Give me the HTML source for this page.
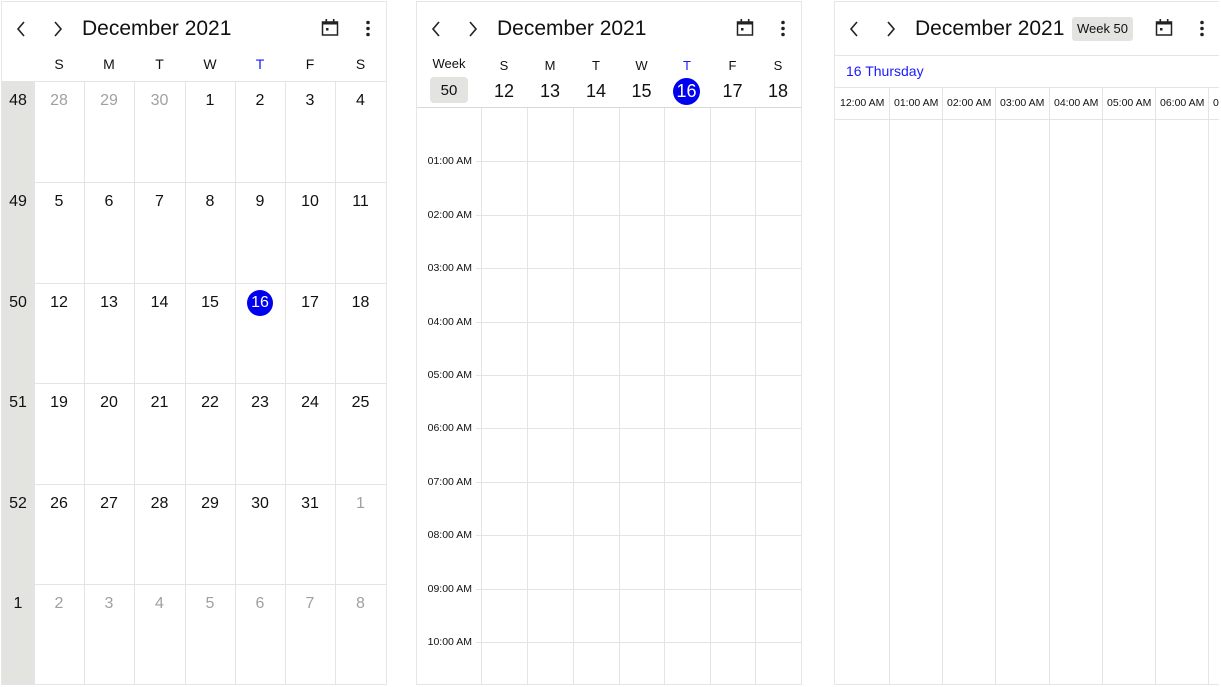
<!DOCTYPE html><html><head><style>
body{margin:0;width:1221px;height:687px;background:#fff;font-family:"Liberation Sans",sans-serif;position:relative;overflow:hidden;color:#111}
.a{position:absolute}
.p{position:absolute;top:1px;height:684px;border:1px solid #e6e6e6;box-sizing:border-box}
.hl{position:absolute;height:1px;background:#e4e4e4}
.vl{position:absolute;width:1px;background:#e4e4e4}
.t{position:absolute;font-size:21px;top:17px}
.c{position:absolute;text-align:center}
</style></head><body>
<div class="p" style="left:1px;width:386px"></div>
<div class="a" style="left:2px;top:81px;width:32px;height:604px;background:#e3e3df"></div>
<div id="p1"></div>
<div class="p" style="left:416px;width:386px"></div>
<div class="a" style="left:430px;top:77px;width:38px;height:26px;background:#e3e3df;border-radius:4px"></div>
<div id="p2"></div>
<div class="p" style="left:834px;width:386px"></div>
<div class="a" style="left:1072px;top:17px;width:61px;height:24px;background:#e3e3df;border-radius:3px;font-size:13px;text-align:center;line-height:24px">Week 50</div>
<div class="hl" style="left:835px;width:384px;top:55px"></div>
<div class="a" style="left:846px;top:63px;font-size:14px;color:#1a1aff">16 Thursday</div>
<div class="hl" style="left:835px;width:384px;top:87px"></div>
<div class="hl" style="left:835px;width:384px;top:119px"></div>
<div id="p3"></div>
<script>
function hdr(x0,ic){
 return `<svg class="a" style="left:${x0+8}px;top:18px" width="22" height="22"><path d="M14 4 L8 11 L14 18" stroke="#222" stroke-width="1.6" fill="none"/></svg>
<svg class="a" style="left:${x0+45}px;top:18px" width="22" height="22"><path d="M8 4 L14 11 L8 18" stroke="#222" stroke-width="1.6" fill="none"/></svg>
<div class="t" style="left:${x0+80}px">December 2021</div>
<svg class="a" style="left:${ic}px;top:18px" width="20" height="20"><rect x="2.5" y="4" width="15" height="13" fill="none" stroke="#222" stroke-width="1.5"/><rect x="2.5" y="4" width="15" height="2.5" fill="#222"/><rect x="5.5" y="1" width="1.6" height="4" fill="#222"/><rect x="12.9" y="1" width="1.6" height="4" fill="#222"/><rect x="6" y="10" width="2.5" height="2.5" fill="#222"/></svg>
<svg class="a" style="left:${ic+45}px;top:19px" width="6" height="20"><circle cx="3" cy="3.5" r="1.8" fill="#222"/><circle cx="3" cy="9.5" r="1.8" fill="#222"/><circle cx="3" cy="15.5" r="1.8" fill="#222"/></svg>`;}
let h='';
h+=hdr(2,320);
const dn=['S','M','T','W','T','F','S'];
const cx=[34,84,134,185,235,285,335,386];
for(let i=0;i<7;i++){h+=`<div class="c" style="left:${cx[i]}px;width:${cx[i+1]-cx[i]}px;top:56px;font-size:14px;color:${i==4?'#1a1aff':'#111'}">${dn[i]}</div>`}
const ry=[81,182,283,383,484,584,685];
const wk=[48,49,50,51,52,1];
const days=[[28,29,30,1,2,3,4],[5,6,7,8,9,10,11],[12,13,14,15,16,17,18],[19,20,21,22,23,24,25],[26,27,28,29,30,31,1],[2,3,4,5,6,7,8]];
for(let r=0;r<6;r++){
 h+=`<div class="hl" style="left:2px;width:384px;top:${ry[r]}px"></div>`;
 h+=`<div class="a" style="left:2px;width:32px;text-align:center;top:${ry[r]+11}px;font-size:16px">${wk[r]}</div>`;
 for(let c=0;c<7;c++){
  let d=days[r][c],grey=(r==0&&c<3)||(r==4&&c==6)||r==5;
  if(r==2&&c==4){h+=`<div class="a" style="left:${cx[c]+12}px;top:${ry[r]+7}px;width:26px;height:26px;border-radius:50%;background:#0000f0;color:#fff;text-align:center;line-height:26px;font-size:16px">16</div>`}
  else h+=`<div class="c" style="left:${cx[c]}px;width:${cx[c+1]-cx[c]}px;top:${ry[r]+11}px;font-size:16px;color:${grey?'#a0a0a0':'#111'}">${d}</div>`;
 }
}
for(let c=0;c<7;c++)h+=`<div class="vl" style="left:${cx[c]}px;top:81px;height:604px"></div>`;
document.getElementById('p1').innerHTML=h;
h=hdr(417,735);
const dx=[481,527,573,619,664,710,755,801];
h+=`<div class="a" style="left:417px;width:64px;text-align:center;top:56px;font-size:13px">Week</div><div class="a" style="left:430px;width:38px;text-align:center;top:82px;font-size:15px">50</div>`;
const n2=[12,13,14,15,16,17,18];
for(let i=0;i<7;i++){
 let w=dx[i+1]-dx[i];
 h+=`<div class="c" style="left:${dx[i]}px;width:${w}px;top:58px;font-size:13px;color:${i==4?'#1a1aff':'#111'}">${dn[i]}</div>`;
 if(i==4)h+=`<div class="a" style="left:${dx[i]+9}px;top:78px;width:27px;height:27px;border-radius:50%;background:#0000f0;color:#fff;text-align:center;line-height:27px;font-size:18px">16</div>`;
 else h+=`<div class="c" style="left:${dx[i]}px;width:${w}px;top:81px;font-size:18px">${n2[i]}</div>`;
}
h+=`<div class="hl" style="left:417px;width:384px;top:107px;background:#d8d8d8"></div>`;
for(let i=0;i<7;i++)h+=`<div class="vl" style="left:${dx[i]}px;top:108px;height:577px"></div>`;
for(let k=1;k<=10;k++){let y=108+53.4*k;
 h+=`<div class="hl" style="left:476px;width:325px;top:${y}px"></div>`;
 h+=`<div class="a" style="left:417px;width:55px;text-align:right;top:${y-6}px;font-size:10.5px">${String(k).padStart(2,'0')}:00 AM</div>`;}
document.getElementById('p2').innerHTML=h;
h=hdr(835,1154);
const tx=[835,889,942,995,1049,1102,1155,1208];
for(let i=0;i<8;i++){
 if(i>0)h+=`<div class="vl" style="left:${tx[i]}px;top:87px;height:598px"></div>`;
 h+=`<div class="a" style="left:${tx[i]+5}px;top:97px;font-size:10.5px;white-space:nowrap">${String(i==0?12:i).padStart(2,'0')}:00 AM</div>`;
}
document.getElementById('p3').innerHTML=h;
</script>
<div class="a" style="left:1219px;top:0;width:2px;height:687px;background:#fff"></div>
</body></html>
